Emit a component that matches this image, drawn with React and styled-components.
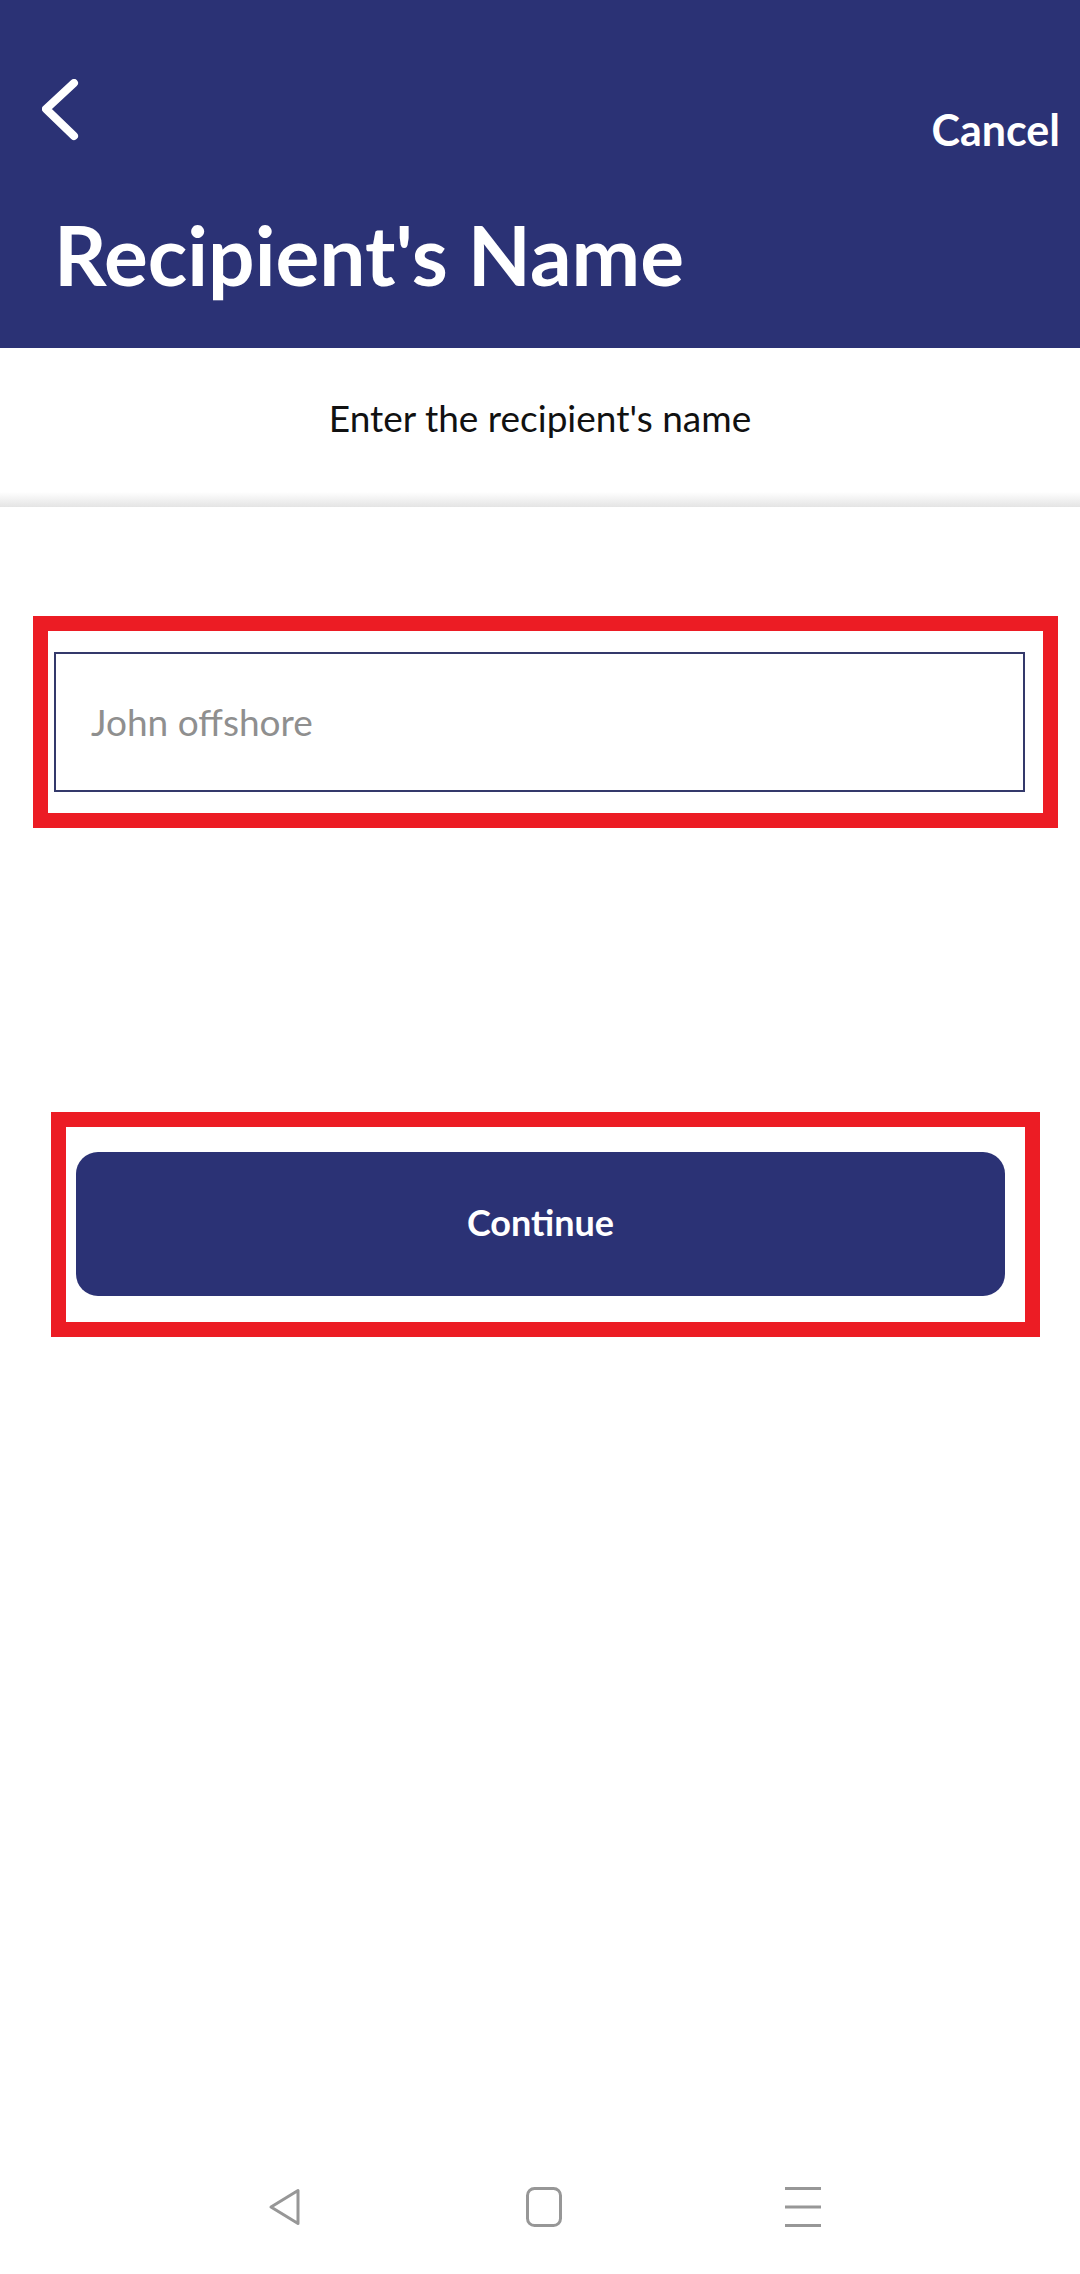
import React from "react";
import styled, { createGlobalStyle } from "styled-components";

const GlobalStyle = createGlobalStyle`
  html, body { margin: 0; padding: 0; background: #ffffff; }
  body { font-family: "Lato", "Noto Sans", sans-serif; -webkit-font-smoothing: antialiased; }
  * { box-sizing: border-box; }
`;

const Page = styled.div`
  width: 1080px;
  min-height: 2274px;
  display: flex;
  flex-direction: column;
  background: #ffffff;
`;

const Header = styled.header`
  height: 348px;
  background: #2b3275;
  padding: 79px 20px 0 42px;
  display: flex;
  flex-direction: column;
`;

const TopBar = styled.div`
  display: flex;
  justify-content: space-between;
  align-items: flex-start;
  height: 62px;
`;

const BackButton = styled.button`
  border: 0;
  background: transparent;
  padding: 0;
  width: 40px;
  height: 62px;
  display: block;
  cursor: pointer;
`;

const CancelLink = styled.span`
  color: #ffffff;
  font-size: 43px;
  font-weight: 700;
  line-height: 1;
  margin-top: 29px;
`;

const Title = styled.h1`
  margin: 72px 0 0 12px;
  color: #ffffff;
  font-size: 82px;
  font-weight: 700;
  line-height: 1;
  letter-spacing: 0;
`;

const SubtitleBar = styled.div`
  height: 159px;
  display: flex;
  justify-content: center;
  padding-top: 44px;
  background: linear-gradient(to bottom, #ffffff 0, #ffffff calc(100% - 15px), #e4e4e4 100%);
`;

const Subtitle = styled.p`
  margin: 0;
  font-size: 37px;
  line-height: 1.4;
  color: #111111;
`;

const Content = styled.main`
  display: flex;
  flex-direction: column;
`;

const Highlight = styled.div`
  border: 15px solid #ec1c24;
  margin-left: ${(p) => p.$left}px;
  margin-top: ${(p) => p.$top}px;
  width: ${(p) => p.$width}px;
  padding: ${(p) => p.$pad};
  background: #ffffff;
`;

const NameInput = styled.input`
  display: block;
  width: 971px;
  height: 140px;
  border: 2px solid #34396b;
  border-radius: 0;
  padding: 0 0 2px 35px;
  font-family: "Lato", "Noto Sans", sans-serif;
  font-size: 37px;
  color: #222222;
  outline: none;
  background: #ffffff;
  &::placeholder { color: #8f8f8f; }
`;

const PrimaryButton = styled.button`
  display: block;
  width: 929px;
  height: 144px;
  border: 0;
  border-radius: 22px;
  padding: 0 0 4px;
  background: #2b3275;
  color: #ffffff;
  font-family: "Lato", "Noto Sans", sans-serif;
  font-size: 36px;
  font-weight: 700;
  cursor: pointer;
`;

const NavBar = styled.nav`
  margin-top: auto;
  height: 118px;
  display: flex;
  justify-content: center;
  align-items: center;
  padding: 0 0 16px 8px;
`;

const NavCell = styled.div`
  width: 259px;
  display: flex;
  justify-content: center;
  align-items: center;
`;

const BackChevron = () => (
  <svg width="40" height="62" viewBox="0 0 40 62" fill="none">
    <path d="M32 4 L4 30 L32 57" stroke="#ffffff" strokeWidth="8" strokeLinecap="round" strokeLinejoin="round" />
  </svg>
);

const NavBack = () => (
  <svg width="36" height="40" viewBox="0 0 36 40" fill="none">
    <path d="M31 3.5 L31 36.5 L4 20 Z" stroke="#979797" strokeWidth="3" strokeLinejoin="round" />
  </svg>
);

const NavHome = () => (
  <svg width="36" height="40" viewBox="0 0 36 40" fill="none">
    <rect x="1.5" y="1.5" width="33" height="37" rx="7" stroke="#979797" strokeWidth="3" />
  </svg>
);

const NavMenu = () => (
  <svg width="36" height="40" viewBox="0 0 36 40" fill="none">
    <path d="M0 1.5 H36 M0 20 H36 M0 38.5 H36" stroke="#979797" strokeWidth="3" />
  </svg>
);

export default function App() {
  return (
    <>
      <GlobalStyle />
      <Page>
        <Header>
          <TopBar>
            <BackButton aria-label="Back">
              <BackChevron />
            </BackButton>
            <CancelLink>Cancel</CancelLink>
          </TopBar>
          <Title>Recipient's Name</Title>
        </Header>
        <SubtitleBar>
          <Subtitle>Enter the recipient's name</Subtitle>
        </SubtitleBar>
        <Content>
          <Highlight $left={33} $top={109} $width={1025} $pad="21px 18px 21px 6px">
            <NameInput placeholder="John offshore" />
          </Highlight>
          <Highlight $left={51} $top={284} $width={989} $pad="25px 20px 26px 10px">
            <PrimaryButton>Continue</PrimaryButton>
          </Highlight>
        </Content>
        <NavBar>
          <NavCell><NavBack /></NavCell>
          <NavCell><NavHome /></NavCell>
          <NavCell><NavMenu /></NavCell>
        </NavBar>
      </Page>
    </>
  );
}
